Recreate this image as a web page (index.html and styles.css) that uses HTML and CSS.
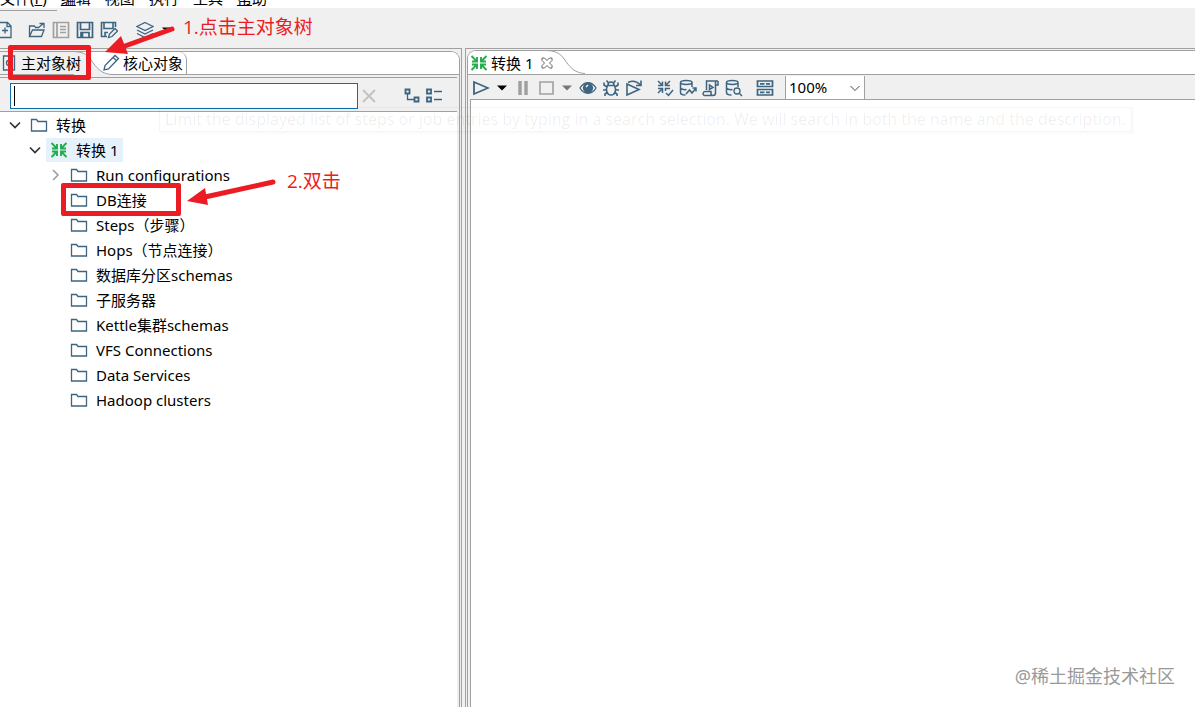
FILE: index.html
```html
<!DOCTYPE html>
<html lang="zh-CN">
<head>
<meta charset="utf-8">
<title>转换 1</title>
<link rel="stylesheet" href="styles.css">
</head>
<body>
<svg class="defs" aria-hidden="true">
  <symbol id="folder" viewBox="0 0 18 18"><path d="M1.5 15V3.5h5l1.500 2h8.500V15z" fill="#fff" stroke="#3d6480" stroke-width="1.300"/></symbol>
  <symbol id="trans" viewBox="0 0 18 18"><path d="M1.500 2l5 5M16.500 2l-5 5M1.500 16l5-5M16.500 16l-5-5M7 3v4.500H2M11 3v4.500h5M7 15v-4.500H2M11 15v-4.500h5" fill="none" stroke="currentColor" stroke-width="1.900"/></symbol>
  <symbol id="caret" viewBox="0 0 14 18"><path d="M2 6.500h10L7 11.500z" fill="currentColor"/></symbol>
  <symbol id="open" viewBox="0 0 12 18"><path d="M1 6.500l5 5 5-5" fill="none" stroke="#333" stroke-width="1.700"/></symbol>
  <symbol id="closed" viewBox="0 0 12 18"><path d="M4 4l5 5-5 5" fill="none" stroke="#9a9a9a" stroke-width="1.500"/></symbol>
</svg>

<nav class="menubar">
  <button>文件(<u>F</u>)</button><button><u>编</u>辑</button><button>视图</button><button>执行</button><button>工具</button><button><u>帮</u>助</button>
</nav>
<div class="menu-line"></div>

<div class="toolbar main-tools">
  <button class="tool" aria-label="新建"><svg viewBox="0 0 18 18"><path d="M3 1.500h8.500L15 5v11.500H3zM11 1.500V5.500h4M9 6.500v6M6 9.500h6"/></svg></button>
  <i class="gap-s"></i>
  <button class="tool" aria-label="打开"><svg viewBox="0 0 18 18"><path d="M1.500 15.500V5h5l1 1.500h3M1.500 15.500l3-6.500H16l-2.500 6.500zM10 7l5.500-4.500M11.500 2.500h4.500V7"/></svg></button>
  <button class="tool off" aria-label="资源库"><svg viewBox="0 0 18 18"><path d="M1.500 1.500h15v15h-15zM5 2v14M8 5.500h6M8 8.500h6M8 11.500h6" stroke-width="1.700"/></svg></button>
  <button class="tool" aria-label="保存"><svg viewBox="0 0 18 18"><path d="M1.500 1.500h15v15h-15zM4.500 2v6.500h9V2M5 16v-4.500h8V16M6.500 12v4" stroke-width="1.700"/></svg></button>
  <button class="tool" aria-label="另存为"><svg viewBox="0 0 18 18"><path d="M7 15.500H1.500v-14h14V6M4 2v5.500h9V2M5 15v-3.500h3" stroke-width="1.600"/><path d="M8.500 16.500l1-3.500L15 7.500l2.500 2.500-5.500 5.500z"/></svg></button>
  <i class="gap-m"></i>
  <button class="tool" aria-label="透视图"><svg viewBox="0 0 18 18"><path d="M9 1.500l8 4-8 4-8-4zM1 9l8 4 8-4M1 12.500l8 4 8-4"/></svg></button>
  <button class="tool arrow" aria-label="更多"><svg viewBox="0 0 14 18"><use href="#caret"/></svg></button>
</div>

<div class="workspace">
  <aside class="side">
    <div class="side-inner">
      <div class="tabs side-tabs">
        <button class="tab selected"><svg class="tab-icon" viewBox="0 0 18 18"><path d="M3.500 2h11v14h-11z"/><circle cx="9" cy="9" r="2.500"/></svg><span>主对象树</span></button>
        <svg class="curve" viewBox="0 0 38 24"><path class="fill" d="M0 0C14 1 16 8 20 13S28 23 38 23.500V24H0z"/><path d="M0 .5C14 1 16 8 20 13S28 23 38 23.500"/></svg>
        <button class="tab second"><svg class="tab-icon" viewBox="0 0 18 18"><path d="M2 16l1-4.500L13 1.500l3.500 3L6.500 15zM11 3.500l3.500 3"/></svg>核心对象</button>
      </div>
      <div class="search">
        <div class="field"><input class="search-box" type="text" aria-label="搜索"><i class="cursor"></i></div>
        <button class="clear" aria-label="清除"><svg viewBox="0 0 14 14"><path d="M1 1l12 12M13 1L1 13"/></svg></button>
        <button class="tool expand" aria-label="展开全部"><svg viewBox="0 0 18 18"><path d="M2.500 2.500h4v4h-4zM11.500 10.500h4v4h-4z" stroke-width="1.800"/><path d="M4.500 6.500v6h7"/></svg></button>
        <button class="tool" aria-label="折叠全部"><svg viewBox="0 0 18 18"><path d="M2 2.500h4v4H2zM2 10.500h4v4H2z" stroke-width="1.800"/><path d="M9 4.500h8M9 12.500h8"/></svg></button>
      </div>
      <div class="tree-area">
        <ul class="tree">
          <li><div class="row"><svg class="twist"><use href="#open"/></svg><svg class="icon"><use href="#folder"/></svg><span>转换</span></div>
            <ul>
              <li><div class="row"><svg class="twist"><use href="#open"/></svg><span class="chosen"><svg class="icon green"><use href="#trans"/></svg><span>转换 1</span></span></div>
                <ul>
                  <li><div class="row"><svg class="twist"><use href="#closed"/></svg><svg class="icon"><use href="#folder"/></svg><span>Run configurations</span></div></li>
                  <li><div class="row leaf"><svg class="icon"><use href="#folder"/></svg><span>DB连接</span></div></li>
                  <li><div class="row leaf"><svg class="icon"><use href="#folder"/></svg><span>Steps（步骤）</span></div></li>
                  <li><div class="row leaf"><svg class="icon"><use href="#folder"/></svg><span>Hops（节点连接）</span></div></li>
                  <li><div class="row leaf"><svg class="icon"><use href="#folder"/></svg><span>数据库分区schemas</span></div></li>
                  <li><div class="row leaf"><svg class="icon"><use href="#folder"/></svg><span>子服务器</span></div></li>
                  <li><div class="row leaf"><svg class="icon"><use href="#folder"/></svg><span>Kettle集群schemas</span></div></li>
                  <li><div class="row leaf"><svg class="icon"><use href="#folder"/></svg><span>VFS Connections</span></div></li>
                  <li><div class="row leaf"><svg class="icon"><use href="#folder"/></svg><span>Data Services</span></div></li>
                  <li><div class="row leaf"><svg class="icon"><use href="#folder"/></svg><span>Hadoop clusters</span></div></li>
                </ul>
              </li>
            </ul>
          </li>
        </ul>
      </div>
    </div>
  </aside>

  <main class="editor">
    <div class="editor-inner">
      <div class="tabs editor-tabs">
        <button class="tab current"><svg class="tab-icon green"><use href="#trans"/></svg><span>转换 1</span><svg class="close" viewBox="0 0 12 12"><path d="M1 1h2.500L6 3.500 8.500 1H11v2.500L8.500 6 11 8.500V11H8.500L6 8.500 3.500 11H1V8.500L3.500 6 1 3.500z"/></svg></button>
        <svg class="curve" viewBox="0 0 38 24"><path d="M0 .5C14 1 16 8 20 13S28 23 38 23.500"/></svg>
      </div>
      <div class="toolbar edit-tools">
        <button class="tool" aria-label="运行"><svg viewBox="0 0 18 18"><path d="M2 3v12l14-6z" stroke-width="1.800"/></svg></button>
        <button class="tool arrow" aria-label="运行选项"><svg><use href="#caret"/></svg></button>
        <button class="tool off" aria-label="暂停"><svg viewBox="0 0 18 18"><path d="M6 2v14M12 2v14" stroke-width="3.500"/></svg></button>
        <button class="tool off" aria-label="停止"><svg viewBox="0 0 18 18"><path d="M3 3h13v12H3z" stroke-width="1.600"/></svg></button>
        <button class="tool arrow dim" aria-label="停止选项"><svg><use href="#caret"/></svg></button>
        <button class="tool" aria-label="预览"><svg viewBox="0 0 18 18"><path d="M1 9c4-7 12-7 16 0-4 7-12 7-16 0z"/><circle cx="9" cy="9" r="4.500" fill="#3d6480"/><path d="M7 8l2-2" stroke="#fff"/></svg></button>
        <button class="tool" aria-label="调试"><svg viewBox="0 0 18 18"><path d="M5.500 6.500h7c2 4 1 9.500-3.500 9.500S3.500 10.500 5.500 6.500zM6 6c0-4 6-4 6 0M4.500 1.500l2 2.500M13.500 1.500l-2 2.500M5 8L2 6V3.500M13 8l3-2V3.500M4.500 11H1M13.500 11H17M5 13.500L3 15v2M13 13.500l2 1.500v2" stroke-width="1.600"/></svg></button>
        <button class="tool" aria-label="重放"><svg viewBox="0 0 18 18"><path d="M2 5V16l12-5.500zM3 3.500c4-2 8-2 12 2M16 1.500v5h-5" stroke-width="1.600"/></svg></button>
        <i></i>
        <button class="tool" aria-label="校验"><svg viewBox="0 0 18 18"><path d="M2 2l4 4M14 2l-4 4M2 14l4-4M6.500 2.500v4H2M9.500 2.500v4H14M6.500 14V9.500H2M9.500 12V9.500H14M10 14l2.500 2.500L17 11" stroke-width="1.500"/></svg></button>
        <button class="tool" aria-label="影响分析"><svg viewBox="0 0 18 18"><path d="M13 8V3.500C13 .8 1.500.8 1.500 3.500v10c0 1.500 2 2.500 5 2.500M1.500 3.500c0 2.500 11.500 2.500 11.500 0M1.500 8.500c0 1.500 3 2.500 6 2M7 15l3.500-4 2.500 3 4-5M13.500 9H17v3.500" stroke-width="1.500"/></svg></button>
        <button class="tool" aria-label="SQL"><svg viewBox="0 0 18 18"><path d="M4.500 11V2H16M13.500 2v12c0 2-1.500 2.500-2.500 2.500H3c-3 0-2-4 0-4h6v2c0 1 1 2 2 2M13.500 6H16V2M7.500 6v4.500l3.500-2z" stroke-width="1.500"/></svg></button>
        <button class="tool" aria-label="浏览数据库"><svg viewBox="0 0 18 18"><path d="M13 8V3.500C13 .8 1.500.8 1.500 3.500v10c0 1.500 2 2.500 5 2.500M1.500 3.500c0 2.500 11.500 2.500 11.500 0M1.500 8.500c0 1.500 3 2.500 6 2M14.500 14.500L17 17" stroke-width="1.500"/><circle cx="12" cy="12" r="3"/></svg></button>
        <i></i>
        <button class="tool" aria-label="显示结果"><svg viewBox="0 0 18 18"><path d="M1.500 2h15v5.500h-15zM1.500 10.500h15V16h-15zM4 4.800h4.500M10 4.800h4M4 13.300h4.500M10 13.300h4" stroke-width="1.700"/></svg></button>
        <label class="zoom"><select aria-label="缩放"><option>100%</option></select><svg viewBox="0 0 12 12"><path d="M1.500 4L6 8.500 10.500 4"/></svg></label>
      </div>
      <div class="canvas"></div>
    </div>
  </main>
</div>

<div class="tip">Limit the displayed list of steps or job entries by typing in a search selection. We will search in both the name and the description.</div>

<div class="mark mark-tab"></div>
<div class="mark mark-db"></div>
<svg class="pointer pointer-one" viewBox="0 0 74 34"><path d="M69 4L22 21" stroke-width="5"/><path class="head" d="M2 27L18 11 25 29z"/></svg>
<svg class="pointer pointer-two" viewBox="0 0 90 32"><path d="M86 5L18 20" stroke-width="5"/><path class="head" d="M0 24L18 11 21 28z"/></svg>
<div class="note note-one">1.点击主对象树</div>
<div class="note note-two">2.双击</div>
<div class="watermark">@稀土掘金技术社区</div>
</body>
</html>
```
FILE: styles.css
```css
* { box-sizing: border-box; }
body {
  margin: 0;
  height: 100vh;
  display: flex;
  flex-direction: column;
  overflow: hidden;
  position: relative;
  background: #f0f0f0;
  color: #000;
  font: 15px/20px "Noto Sans", "Noto Sans CJK SC", sans-serif;
}
button, input, select { font: inherit; color: inherit; }
button { border: 0; padding: 0; background: none; }
ul { list-style: none; margin: 0; padding: 0; }
svg { display: block; fill: none; }
.defs { position: absolute; width: 0; height: 0; }
.green { color: #22ac4b; }

.menubar {
  display: flex;
  align-items: flex-end;
  gap: 14px;
  height: 8px;
  overflow: hidden;
  background: #fff;
}
.menu-line { width: 57px; height: 3px; border-bottom: 1px solid #a0a0a0; }

.toolbar { display: flex; align-items: center; }
.main-tools { height: 37px; gap: 6px; margin-left: -4px; }
.gap-s { width: 2px; }
.gap-m { width: 6px; }
.tool { flex: none; width: 18px; height: 18px; }
.tool svg { width: 100%; height: 18px; stroke: #3d6480; stroke-width: 1.3; }
.tool.off svg { stroke: #a0a0a0; }
.tool.arrow { width: 14px; }
.tool.arrow svg { stroke: none; color: #000; }
.tool.dim svg { color: #777; }

.workspace { flex: 1; min-height: 0; display: grid; grid-template-columns: 462px 1fr; gap: 3px; }
.side { display: flex; border: solid #a0a0a0; border-width: 1px 1px 0 0; padding: 2px 1px 0 0; }
.side-inner {
  flex: 1;
  display: flex;
  flex-direction: column;
  border: solid #a0a0a0;
  border-width: 1px 1px 0 0;
  border-radius: 0 9px 0 0;
  overflow: hidden;
}
.tabs { display: flex; height: 23px; background: #fff; border-bottom: 1px solid #a0a0a0; }
.tab { display: flex; align-items: center; white-space: nowrap; }
.tab span { position: relative; z-index: 1; }
.tab-icon { flex: none; width: 18px; height: 18px; stroke: #3d6480; stroke-width: 1.3; }
.tab-icon.green { stroke: none; }
.side-tabs .selected { width: 74px; gap: 3px; background: #f0f0f0; }
.curve { flex: none; width: 38px; height: 24px; margin-top: -1px; stroke: #a0a0a0; }
.curve .fill { fill: #f0f0f0; stroke: none; }
.side-tabs .second { gap: 3px; margin-left: -10px; padding-right: 3px; border-right: 1px solid #a0a0a0; border-radius: 0 8px 0 0; }

.search {
  display: flex;
  align-items: center;
  height: 35px;
  margin-top: 2px;
  margin-right: 2px;
  padding: 3px 14px 0 10px;
  border-top: 1px solid #a0a0a0;
  border-bottom: 1px solid #a0a0a0;
}
.field { position: relative; flex: 1; height: 26px; }
.search-box { display: block; width: 100%; height: 26px; border: 1px solid #0f6cae; padding: 0 4px; background: #fff; outline: 0; }
.cursor { position: absolute; left: 4px; top: 3px; width: 1px; height: 20px; background: #000; pointer-events: none; }
.clear { width: 14px; height: 14px; margin: 0 27px 0 4px; }
.clear svg { stroke: #c3c3c3; stroke-width: 2; }
.expand { margin-right: 4px; }
.tree-area { flex: 1; margin-right: 2px; background: #fff; }
.tree ul { padding-left: 20px; }
.row { display: flex; align-items: center; height: 25px; padding-left: 9px; white-space: nowrap; }
.twist { width: 12px; height: 18px; margin-right: 9px; }
.row .icon { flex: none; width: 18px; height: 18px; margin-right: 8px; }
.leaf { padding-left: 30px; }
.chosen { display: flex; align-items: center; height: 24px; margin-left: -4px; padding: 0 5px 0 4px; background: #e5f1fb; }

.editor { display: flex; min-width: 0; border: solid #a0a0a0; border-width: 1px 0 0 1px; padding: 1px 0 0 1px; }
.editor-inner { flex: 1; min-width: 0; display: flex; flex-direction: column; border: solid #a0a0a0; border-width: 1px 0 0 1px; border-radius: 9px 0 0 0; overflow: hidden; }
.editor-tabs { height: 24px; }
.current { padding-left: 2px; gap: 3px; }
.close { flex: none; width: 12px; height: 12px; margin-left: 5px; stroke: #666; stroke-width: 1; }
.editor-tabs .curve { margin-left: -6px; }
.edit-tools { height: 25px; gap: 5px; padding: 1px 0 0 2px; margin-left: 2px; border-bottom: 1px solid #a0a0a0; }
.edit-tools i { width: 3px; }
.zoom { position: relative; width: 80px; height: 23px; margin-left: 6px; border: solid #a0a0a0; border-width: 0 1px; background: #fff; }
.zoom select { display: block; width: 100%; height: 22px; border: 0; padding: 0 3px; appearance: none; background: none; outline: 0; }
.zoom svg { position: absolute; right: 3px; top: 6px; width: 12px; height: 12px; stroke: #444; pointer-events: none; }
.canvas { flex: 1; margin-left: 2px; border-left: 1px solid #a0a0a0; background: #fff; }

.tip {
  position: absolute;
  left: 159px;
  top: 107px;
  padding: 1px 5px 2px;
  border: 1px solid rgba(0, 0, 0, .04);
  box-shadow: 2px 2px 2px rgba(0, 0, 0, .02);
  color: rgba(0, 0, 0, .07);
  font-family: "Open Sans", sans-serif;
  font-size: 16px;
  white-space: nowrap;
  pointer-events: none;
}
.mark { position: absolute; z-index: 2; border: 5px solid #ec1c24; border-radius: 2px; pointer-events: none; }
.mark-tab { left: 8px; top: 45px; width: 83px; height: 35px; }
.mark-db { left: 61px; top: 183px; width: 120px; height: 33px; }
.pointer { position: absolute; stroke: #ec1c24; stroke-linecap: round; pointer-events: none; }
.pointer .head { fill: #ec1c24; stroke: none; }
.pointer-one { left: 103px; top: 25px; width: 74px; height: 34px; }
.pointer-two { left: 187px; top: 177px; width: 90px; height: 32px; }
.note { position: absolute; color: #ec1c24; font: 19px/24px "Open Sans", "Noto Sans CJK SC", sans-serif; white-space: nowrap; }
.note-one { left: 183px; top: 15px; }
.note-two { left: 287px; top: 169px; }
.watermark { position: absolute; right: 20px; bottom: 19px; color: #999; font-size: 18px; line-height: 24px; }
```
